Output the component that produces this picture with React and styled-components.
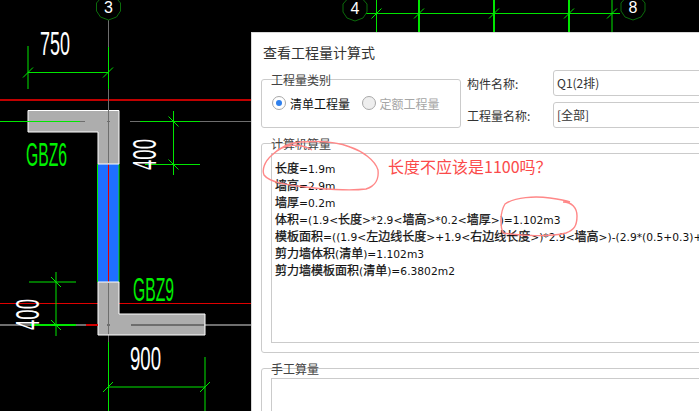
import React from 'react';
import styled, { createGlobalStyle } from 'styled-components';

const GlobalStyle = createGlobalStyle`
  html, body {
    margin: 0;
    background: #000;
  }
`;

const FONT = `"Noto Sans CJK SC", "Liberation Sans", sans-serif`;
const BORDER = '#cbcbcb';

const Screen = styled.div`
  position: relative;
  width: 699px;
  height: 411px;
  overflow: hidden;
  background: #000;
  font-family: ${FONT};
`;

const Canvas = styled.svg`
  display: block;
`;

// Floating dialog, runs off the right and bottom of the shot
const Dialog = styled.div`
  position: absolute;
  left: 251px;
  top: 32px;
  width: 480px;
  height: 400px;
  box-sizing: border-box;
  padding: 9px 9px 0 9px;
  background: #fff;
  border: 1px solid #d8d8d8;
  color: #333;
  font-size: 12px;
`;

const Title = styled.div`
  height: 20px;
  font-size: 14px;
  line-height: 20px;
  margin-left: 2px;
  margin-bottom: 8px;
  white-space: nowrap;
`;

const TopRow = styled.div`
  display: flex;
  align-items: flex-end;
`;

const Group = styled.div`
  box-sizing: border-box;
  width: ${(p) => p.$width || 'auto'};
  height: ${(p) => p.$height};
  padding: 0 9px;
  border: 1px solid ${BORDER};
  border-radius: 3px;
  flex: none;
`;

const Legend = styled.div`
  height: 16px;
  margin-top: -8px;
  line-height: 16px;
  color: #444;
  white-space: nowrap;
`;

const RadioRow = styled.div`
  display: flex;
  align-items: center;
  height: 20px;
  margin-top: 5px;
  margin-left: 1px;
`;

const RadioItem = styled.div`
  display: flex;
  align-items: center;
  gap: 4px;
  width: 93px;
  color: ${(p) => (p.$disabled ? '#a6a6a6' : '#111')};
`;

const RadioMark = styled.span`
  box-sizing: border-box;
  width: 14px;
  height: 14px;
  border-radius: 50%;
  border: 1px solid #a8a8a8;
  background: ${(p) => (p.$disabled ? '#eee' : '#fff')};
  display: flex;
  align-items: center;
  justify-content: center;
  flex: none;
  &::after {
    content: '';
    display: ${(p) => (p.$checked ? 'block' : 'none')};
    width: 6px;
    height: 6px;
    border-radius: 50%;
    background: #2f80ed;
  }
`;

const Fields = styled.div`
  display: flex;
  flex-direction: column;
  gap: 6px;
  margin-left: 6px;
  flex: 1;
`;

const Field = styled.div`
  display: flex;
  align-items: center;
`;

const FieldLabel = styled.div`
  width: 86px;
  flex: none;
`;

const FieldValue = styled.div`
  box-sizing: border-box;
  flex: 1;
  height: 26px;
  line-height: 24px;
  padding-left: 3px;
  border: 1px solid ${BORDER};
  border-radius: 3px;
`;

const SectionGroup = styled(Group)`
  margin-top: 15px;
`;

const TextBox = styled.div`
  box-sizing: border-box;
  height: ${(p) => p.$height};
  margin-top: 1px;
  padding: 5px 4px 5px 3px;
  border: 1px solid ${BORDER};
  color: #111;
  line-height: 17px;
  white-space: nowrap;
  overflow: hidden;
`;

const Line = styled.div`
  height: 17px;
  -webkit-text-stroke: 0.25px #111;
`;

// the formulas use a wider latin face than the hanzi around them
const Latin = styled.span`
  font-family: "DejaVu Sans", sans-serif;
  font-size: 10.7px;
  -webkit-text-stroke: 0;
`;

const Marks = styled.svg`
  position: absolute;
  left: 0;
  top: 0;
  pointer-events: none;
`;

const Note = styled.div`
  position: absolute;
  left: 388px;
  top: 155px;
  font-size: 16px;
  line-height: 22px;
  color: #fb4a4a;
  white-space: nowrap;
`;

const GREEN = '#00e600';
const GREY = '#6e6e6e';

const Seg = ({ x1, y1, x2, y2, c = GREEN, w = 1 }) => (
  <line x1={x1} y1={y1} x2={x2} y2={y2} stroke={c} strokeWidth={w} />
);

// oblique tick on a dimension line
const Tick = ({ x, y, back }) => (
  <line x1={x - 5} y1={back ? y - 5 : y + 5} x2={x + 5} y2={back ? y + 5 : y - 5} stroke={GREEN} />
);

const AxisBubble = ({ x, y, label }) => (
  <g>
    <polygon
      points={`${x - 5},${y - 12} ${x + 5},${y - 12} ${x + 12},${y - 4} ${x + 12},${y + 4} ${x + 8},${y + 10} ${x},${y + 13} ${x - 8},${y + 10} ${x - 12},${y + 4} ${x - 12},${y - 4}`}
      fill="#000"
      stroke="#0b6b0b"
    />
    <text x={x} y={y + 6} fill="#fff" fontSize="16" textAnchor="middle" fontFamily="Liberation Sans">
      {label}
    </text>
  </g>
);

const CadText = ({ x, y, w, size, fill = '#fff', rotate, children }) => (
  <text
    x={rotate ? 0 : x}
    y={rotate ? 0 : y}
    transform={rotate ? `translate(${x} ${y}) rotate(-90)` : undefined}
    fill={fill}
    fontSize={size}
    fontFamily="Liberation Sans"
    textLength={w}
    lengthAdjust="spacingAndGlyphs"
  >
    {children}
  </text>
);

const Drawing = () => (
  <Canvas width="699" height="411" viewBox="0 0 699 411">
    {/* axis lines */}
    <Seg x1="0" y1="100" x2="251" y2="100" c="#c00000" w="2" />
    <Seg x1="0" y1="303.5" x2="251" y2="303.5" c="#e00000" />
    <Seg x1="108.5" y1="20" x2="108.5" y2="342" c={GREY} />
    <Seg x1="108.5" y1="47" x2="108.5" y2="89" />
    <Seg x1="0" y1="325" x2="251" y2="325" c={GREY} w="2" />
    <Seg x1="130" y1="121.5" x2="251" y2="121.5" c={GREY} />

    {/* wall */}
    <rect x="98" y="164" width="21" height="118" fill="#1f6fff" />
    <Seg x1="97.5" y1="164" x2="97.5" y2="282" />
    <Seg x1="119" y1="164" x2="119" y2="282" />
    <Seg x1="108.5" y1="164" x2="108.5" y2="282" c="#e00000" />

    {/* column GBZ6 */}
    <polygon points="28,110.5 119,110.5 119,164 98,164 98,132 28,132" fill="#adadad" stroke="#fff" />
    <Seg x1="0" y1="121.5" x2="80" y2="121.5" />
    <Seg x1="80" y1="121.5" x2="85" y2="121.5" c={GREY} />
    <Seg x1="107" y1="121.5" x2="110" y2="121.5" c={GREY} />
    <Seg x1="108.5" y1="110" x2="108.5" y2="163" c={GREY} />

    {/* column GBZ9 */}
    <polygon points="98,282 119,282 119,314 205,314 205,335 98,335" fill="#adadad" stroke="#fff" />
    <Seg x1="131" y1="325" x2="204" y2="325" c={GREY} w="2" />
    <Seg x1="107" y1="325" x2="110" y2="325" c={GREY} w="2" />
    <Seg x1="108.5" y1="283" x2="108.5" y2="334" c={GREY} />
    <Seg x1="30" y1="325" x2="76" y2="325" w="2" />
    <Seg x1="86" y1="325" x2="98" y2="325" c="#d00000" w="2" />

    {/* 750 */}
    <Seg x1="28" y1="46" x2="28" y2="89" />
    <Seg x1="28" y1="72.5" x2="108" y2="72.5" />
    <Tick x={28} y={72.5} />
    <Tick x={108} y={72.5} />
    <CadText x={40} y={55} w={30} size={33}>750</CadText>

    {/* upper 400 */}
    <Seg x1="173.5" y1="111" x2="173.5" y2="175" />
    <Seg x1="140" y1="121.5" x2="200" y2="121.5" />
    <Seg x1="145" y1="164.5" x2="200" y2="164.5" />
    <Tick x={173.5} y={121.5} back />
    <Tick x={173.5} y={164.5} back />
    <CadText x={156} y={170} w={31} size={33} rotate>400</CadText>

    {/* lower 400 */}
    <Seg x1="56" y1="272" x2="56" y2="336" />
    <Seg x1="29" y1="282" x2="76" y2="282" />
    <Tick x={56} y={282} back />
    <Tick x={56} y={325} back />
    <CadText x={39} y={330} w={31} size={33} rotate>400</CadText>

    {/* 900 */}
    <Seg x1="108.5" y1="342" x2="108.5" y2="411" />
    <Seg x1="205" y1="357" x2="205" y2="411" />
    <Seg x1="108" y1="387" x2="205" y2="387" />
    <Tick x={108} y={387} />
    <Tick x={205} y={387} />
    <CadText x={130} y={370} w={31} size={33}>900</CadText>

    <CadText x={26} y={166} w={41} size={34} fill="#00f000">GBZ6</CadText>
    <CadText x={133} y={301} w={41} size={34} fill="#00f000">GBZ9</CadText>

    {/* top dimension chain */}
    <Seg x1="366" y1="13.5" x2="620" y2="13.5" />
    <Seg x1="376.5" y1="0" x2="376.5" y2="32" />
    <Seg x1="419" y1="0" x2="419" y2="32" w="2" />
    <Seg x1="494" y1="0" x2="494" y2="32" w="2" />
    <Seg x1="569" y1="0" x2="569" y2="32" w="2" />
    <Seg x1="612" y1="0" x2="612" y2="32" />
    <Tick x={376.5} y={13.5} />
    <Tick x={419} y={13.5} />
    <Tick x={494} y={13.5} />
    <Tick x={569} y={13.5} />
    <Tick x={612} y={13.5} />

    <AxisBubble x={108.5} y={7} label="3" />
    <AxisBubble x={355} y={8} label="4" />
    <AxisBubble x={633} y={7} label="8" />
  </Canvas>
);

const lines = [
  '长度=1.9m',
  '墙高=2.9m',
  '墙厚=0.2m',
  '体积=(1.9<长度>*2.9<墙高>*0.2<墙厚>)=1.102m3',
  '模板面积=((1.9<左边线长度>+1.9<右边线长度>)*2.9<墙高>)-(2.9*(0.5+0.3)+',
  '剪力墙体积(清单)=1.102m3',
  '剪力墙模板面积(清单)=6.3802m2',
];

// odd parts of the split are the latin runs
const Formula = ({ text }) => (
  <Line>
    {text.split(/([\x00-\x7f]+)/).map((part, i) => (i % 2 ? <Latin key={i}>{part}</Latin> : part))}
  </Line>
);

const App = () => (
  <Screen>
    <GlobalStyle />
    <Drawing />
    <Dialog>
      <Title>查看工程量计算式</Title>
      <TopRow>
        <Group $width="200px" $height="49px">
          <Legend>工程量类别</Legend>
          <RadioRow>
            <RadioItem>
              <RadioMark $checked />
              清单工程量
            </RadioItem>
            <RadioItem $disabled>
              <RadioMark $disabled />
              定额工程量
            </RadioItem>
          </RadioRow>
        </Group>
        <Fields>
          <Field>
            <FieldLabel>构件名称:</FieldLabel>
            <FieldValue>Q1(2排)</FieldValue>
          </Field>
          <Field>
            <FieldLabel>工程量名称:</FieldLabel>
            <FieldValue>[全部]</FieldValue>
          </Field>
        </Fields>
      </TopRow>
      <SectionGroup $height="210px">
        <Legend>计算机算量</Legend>
        <TextBox $height="190px">
          {lines.map((text) => (
            <Formula key={text} text={text} />
          ))}
        </TextBox>
      </SectionGroup>
      <SectionGroup $height="80px">
        <Legend>手工算量</Legend>
        <TextBox $height="70px" />
      </SectionGroup>
    </Dialog>
    <Note>长度不应该是1100吗？</Note>
    <Marks width="699" height="411" viewBox="0 0 699 411" fill="none" stroke="#f88" strokeWidth="1.4">
      <path d="M312 150 C300 143 285 143 272 155 C264 162 262 170 264 175 C270 183 290 185 305 187 C320 189 350 191 366 189 C376 186 379 178 378 170 C375 160 362 151 350 147 C335 141 315 141 300 142 C288 143 280 147 272 155" />
      <path d="M563 202 C572 202 577 208 577 216 C577 226 574 230 566 233 C550 237 520 236 503 233 C500 226 500 212 505 204 C515 197 535 196 550 198 C558 199 565 200 570 202" />
    </Marks>
  </Screen>
);

export default App;
